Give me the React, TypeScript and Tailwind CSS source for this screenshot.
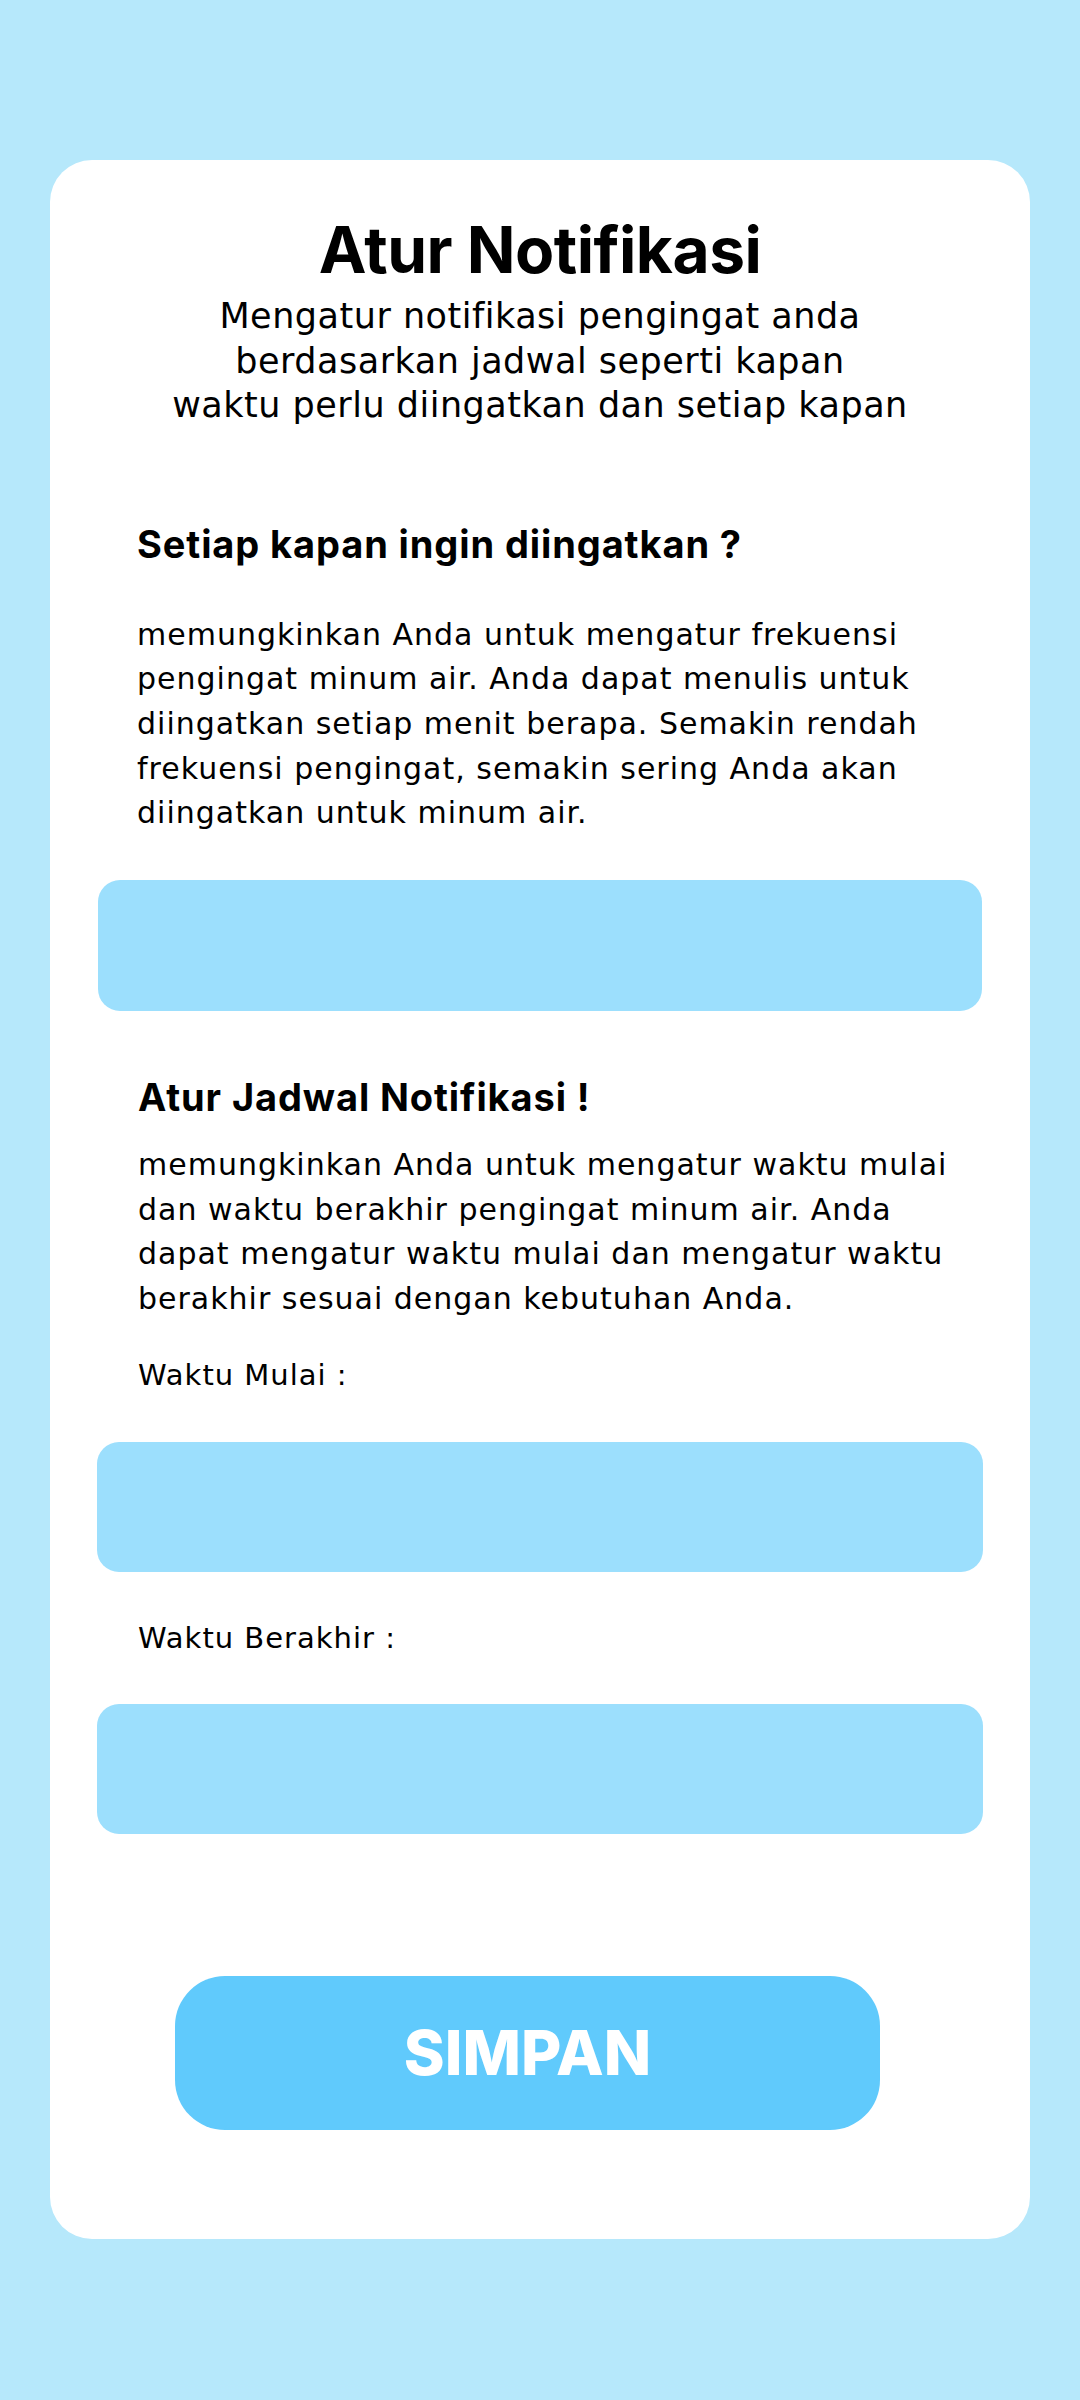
import React from "react";

export default function App() {
  return (
    <div className="w-[1080px] h-[2400px] bg-[#B6E8FB] pt-[160px] pl-[50px] font-['DejaVu_Sans','Noto_Sans',sans-serif]">
      <div className="w-[980px] h-[2079px] bg-white rounded-[42px] flex flex-col pt-[58px]">
        <h1 className="font-['Inter','Liberation_Sans',sans-serif] text-[64px] leading-none font-bold text-black text-center tracking-[-0.5px]">
          Atur Notifikasi
        </h1>
        <p className="mt-[12px] text-[35px] leading-[44.5px] tracking-[0.5px] text-black text-center">
          Mengatur notifikasi pengingat anda
          <br />
          berdasarkan jadwal seperti kapan
          <br />
          waktu perlu diingatkan dan setiap kapan
        </p>

        <h2 className="font-['Inter','Liberation_Sans',sans-serif] mt-[97px] ml-[87px] text-[38px] leading-none font-bold text-black tracking-[0.9px]">
          Setiap kapan ingin diingatkan ?
        </h2>
        <p className="mt-[50px] ml-[87px] text-[30px] leading-[44.7px] tracking-[1px] text-black">
          memungkinkan Anda untuk mengatur frekuensi
          <br />
          pengingat minum air. Anda dapat menulis untuk
          <br />
          diingatkan setiap menit berapa. Semakin rendah
          <br />
          frekuensi pengingat, semakin sering Anda akan
          <br />
          diingatkan untuk minum air.
        </p>
        <div className="mt-[44px] ml-[48px] w-[884px] h-[131px] rounded-[22px] bg-[#9CDFFD]" />

        <h2 className="font-['Inter','Liberation_Sans',sans-serif] mt-[67px] ml-[88px] text-[38px] leading-none font-bold text-black tracking-[0.9px]">
          Atur Jadwal Notifikasi !
        </h2>
        <p className="mt-[27px] ml-[88px] text-[30px] leading-[44.6px] tracking-[1px] text-black">
          memungkinkan Anda untuk mengatur waktu mulai
          <br />
          dan waktu berakhir pengingat minum air. Anda
          <br />
          dapat mengatur waktu mulai dan mengatur waktu
          <br />
          berakhir sesuai dengan kebutuhan Anda.
        </p>
        <p className="mt-[32px] ml-[88px] text-[29px] leading-[44.7px] tracking-[1px] text-black">
          Waktu Mulai :
        </p>
        <div className="mt-[44px] ml-[47px] w-[886px] h-[130px] rounded-[22px] bg-[#9CDFFD]" />
        <p className="mt-[44px] ml-[88px] text-[29px] leading-[44.7px] tracking-[1px] text-black">
          Waktu Berakhir :
        </p>
        <div className="mt-[43px] ml-[47px] w-[886px] h-[130px] rounded-[22px] bg-[#9CDFFD]" />

        <button className="font-['Inter','Liberation_Sans',sans-serif] mt-[142px] ml-[125px] w-[705px] h-[154px] rounded-[50px] bg-[#60CAFC] text-white text-[62px] font-extrabold flex items-center justify-center">
          SIMPAN
        </button>
      </div>
    </div>
  );
}
